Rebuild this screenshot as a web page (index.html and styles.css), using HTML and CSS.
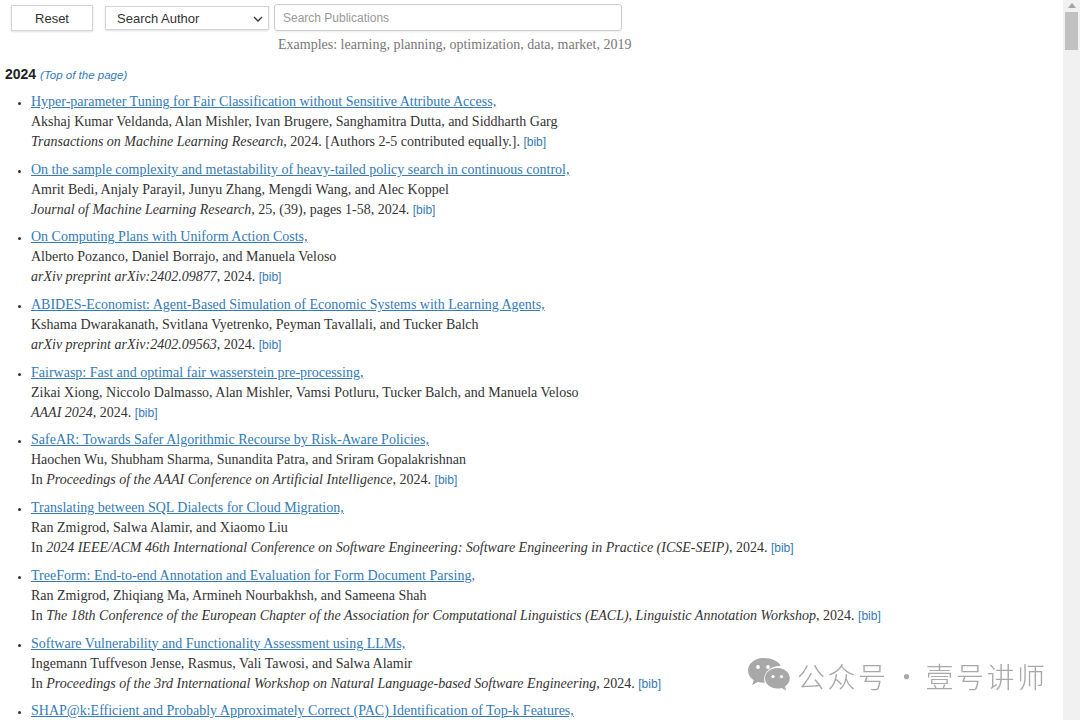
FILE: index.html
```html
<!DOCTYPE html>
<html>
<head>
<meta charset="utf-8">
<link rel="stylesheet" href="styles.css">
</head>
<body>
<div class="controls">
  <button class="reset">Reset</button>
  <div class="select">Search Author<svg class="chev" width="10" height="6" viewBox="0 0 10 6"><path d="M1 1l4 4 4-4" fill="none" stroke="#333" stroke-width="1.3"/></svg></div>
  <div class="search">
    <div class="input">Search Publications</div>
    <div class="examples">Examples: learning, planning, optimization, data, market, 2019</div>
  </div>
</div>
<h2 class="year">2024 <a class="top" href="#">(Top of the page)</a></h2>
<ul class="pubs">
  <li><a href="#">Hyper-parameter Tuning for Fair Classification without Sensitive Attribute Access,</a><br>Akshaj Kumar Veldanda, Alan Mishler, Ivan Brugere, Sanghamitra Dutta, and Siddharth Garg<br><i>Transactions on Machine Learning Research</i>, 2024. [Authors 2-5 contributed equally.]. <a class="bib" href="#">[bib]</a></li>
  <li><a href="#">On the sample complexity and metastability of heavy-tailed policy search in continuous control,</a><br>Amrit Bedi, Anjaly Parayil, Junyu Zhang, Mengdi Wang, and Alec Koppel<br><i>Journal of Machine Learning Research</i>, 25, (39), pages 1-58, 2024. <a class="bib" href="#">[bib]</a></li>
  <li><a href="#">On Computing Plans with Uniform Action Costs,</a><br>Alberto Pozanco, Daniel Borrajo, and Manuela Veloso<br><i>arXiv preprint arXiv:2402.09877</i>, 2024. <a class="bib" href="#">[bib]</a></li>
  <li><a href="#">ABIDES-Economist: Agent-Based Simulation of Economic Systems with Learning Agents,</a><br>Kshama Dwarakanath, Svitlana Vyetrenko, Peyman Tavallali, and Tucker Balch<br><i>arXiv preprint arXiv:2402.09563</i>, 2024. <a class="bib" href="#">[bib]</a></li>
  <li><a href="#">Fairwasp: Fast and optimal fair wasserstein pre-processing,</a><br>Zikai Xiong, Niccolo Dalmasso, Alan Mishler, Vamsi Potluru, Tucker Balch, and Manuela Veloso<br><i>AAAI 2024</i>, 2024. <a class="bib" href="#">[bib]</a></li>
  <li><a href="#">SafeAR: Towards Safer Algorithmic Recourse by Risk-Aware Policies,</a><br>Haochen Wu, Shubham Sharma, Sunandita Patra, and Sriram Gopalakrishnan<br>In <i>Proceedings of the AAAI Conference on Artificial Intelligence</i>, 2024. <a class="bib" href="#">[bib]</a></li>
  <li><a href="#">Translating between SQL Dialects for Cloud Migration,</a><br>Ran Zmigrod, Salwa Alamir, and Xiaomo Liu<br>In <i>2024 IEEE/ACM 46th International Conference on Software Engineering: Software Engineering in Practice (ICSE-SEIP)</i>, 2024. <a class="bib" href="#">[bib]</a></li>
  <li><a href="#">TreeForm: End-to-end Annotation and Evaluation for Form Document Parsing,</a><br>Ran Zmigrod, Zhiqiang Ma, Armineh Nourbakhsh, and Sameena Shah<br>In <i>The 18th Conference of the European Chapter of the Association for Computational Linguistics (EACL), Linguistic Annotation Workshop</i>, 2024. <a class="bib" href="#">[bib]</a></li>
  <li><a href="#">Software Vulnerability and Functionality Assessment using LLMs,</a><br>Ingemann Tuffveson Jense, Rasmus, Vali Tawosi, and Salwa Alamir<br>In <i>Proceedings of the 3rd International Workshop on Natural Language-based Software Engineering</i>, 2024. <a class="bib" href="#">[bib]</a></li>
  <li><a href="#">SHAP@k:Efficient and Probably Approximately Correct (PAC) Identification of Top-k Features,</a><br>Sanjay Kariyappa, Leonidas Tsepenekas, Freddy Lécué, and Daniele Magazzeni<br>In <i>Proceedings of the AAAI Conference on Artificial Intelligence</i>, 2024. <a class="bib" href="#">[bib]</a></li>
</ul>
<div class="watermark">
  <svg width="44" height="38" viewBox="0 0 44 38">
    <path d="M16 1C7.7 1 1 6.6 1 13.5c0 4 2.2 7.5 5.7 9.8L5.3 28l5.4-3c1.7.5 3.4.8 5.3.8 .6 0 1.2 0 1.8-.1-.4-1.2-.6-2.4-.6-3.7 0-7.3 7-13.1 15.6-13.1h.8C32 4.3 24.8 1 16 1z" fill="#a8a8a8"/>
    <circle cx="11" cy="10" r="1.9" fill="#fff"/>
    <circle cx="21" cy="10" r="1.9" fill="#fff"/>
    <path d="M30.5 11C23.6 11 18 15.6 18 21.3s5.6 10.3 12.5 10.3c1.5 0 2.9-.2 4.2-.6l4.5 2.5-1.2-4c2.9-1.9 4.8-4.8 4.8-8.2C42.8 15.6 37.3 11 30.5 11z" fill="#a8a8a8"/>
    <circle cx="26" cy="19.5" r="1.6" fill="#fff"/>
    <circle cx="34.5" cy="19.5" r="1.6" fill="#fff"/>
  </svg>
  <span class="wm-text">公众号</span><span class="wm-dot">·</span><span class="wm-text">壹号讲师</span>
</div>
<div class="scrollbar">
  <svg class="arrow" width="8" height="5" viewBox="0 0 8 5"><path d="M0 5L4 0 8 5z" fill="#a3a3a3"/></svg>
  <div class="thumb"></div>
</div>
</body>
</html>
```

FILE: styles.css
```css
html, body {
  margin: 0;
  padding: 0;
  background: #fff;
}
body {
  font-family: "Liberation Serif", "Times New Roman", serif;
  font-size: 14px;
  color: #333;
}
.controls {
  display: flex;
  align-items: flex-start;
  padding: 4px 0 0 11px;
}
.reset {
  width: 82px;
  height: 26px;
  margin-top: 1px;
  background: #fff;
  border: 1px solid #d4d4d4;
  box-shadow: 0 1px 2px rgba(0,0,0,0.12);
  font-family: "Liberation Sans", Arial, sans-serif;
  font-size: 13px;
  color: #333;
  padding: 0;
}
.select {
  margin-left: 12px;
  margin-top: 2px;
  width: 164px;
  height: 24px;
  box-sizing: border-box;
  border: 1px solid #d4d4d4;
  box-shadow: 0 1px 2px rgba(0,0,0,0.12);
  display: flex;
  align-items: center;
  justify-content: space-between;
  padding: 0 5px 0 11px;
  font-family: "Liberation Sans", Arial, sans-serif;
  font-size: 13px;
  color: #333;
}
.chev { margin-top: 1px; }
.search {
  margin-left: 5px;
  display: flex;
  flex-direction: column;
}
.input {
  width: 348px;
  height: 27px;
  box-sizing: border-box;
  border: 1px solid #ccc;
  border-radius: 3px;
  box-shadow: 0 1px 2px rgba(0,0,0,0.08);
  padding: 0 8px;
  display: flex;
  align-items: center;
  font-family: "Liberation Sans", Arial, sans-serif;
  font-size: 12px;
  color: #999;
}
.examples {
  margin-top: 5px;
  padding-left: 4px;
  font-size: 14px;
  color: #777;
  white-space: nowrap;
  line-height: 18px;
}
.year {
  margin: 11px 0 0 5px;
  font-family: "Liberation Sans", Arial, sans-serif;
  font-size: 14px;
  font-weight: bold;
  color: #222;
  line-height: 18px;
}
.top {
  font-size: 11.5px;
  font-weight: normal;
  font-style: italic;
  color: #337ab7;
  text-decoration: none;
}
.pubs {
  margin: 8px 0 0 0;
  padding-left: 31px;
  line-height: 20px;
}
.pubs li {
  margin-bottom: 7.7px;
}
.pubs li::marker {
  font-size: 11px;
}
.pubs a {
  color: #337ab7;
  text-decoration: underline;
}
.pubs a.bib {
  text-decoration: none;
  font-family: "Liberation Sans", Arial, sans-serif;
  font-size: 12px;
}
.watermark {
  position: fixed;
  left: 747px;
  top: 656px;
  display: flex;
  align-items: center;
  color: #a8a8a8;
  font-family: "Noto Sans CJK SC", sans-serif;
  font-weight: 300;
  font-size: 28px;
  line-height: 40px;
}
.watermark svg {
  margin-right: 6px;
}
.wm-text {
  letter-spacing: 2.5px;
}
.wm-dot {
  margin: 0 5px 0 4px;
}
.scrollbar {
  position: fixed;
  top: 0;
  right: 0;
  width: 17px;
  height: 720px;
  background: #f1f1f1;
  display: flex;
  flex-direction: column;
  align-items: center;
}
.arrow {
  margin-top: 3px;
}
.thumb {
  margin-top: 4px;
  width: 13px;
  height: 38px;
  background: #c1c1c1;
}
```
